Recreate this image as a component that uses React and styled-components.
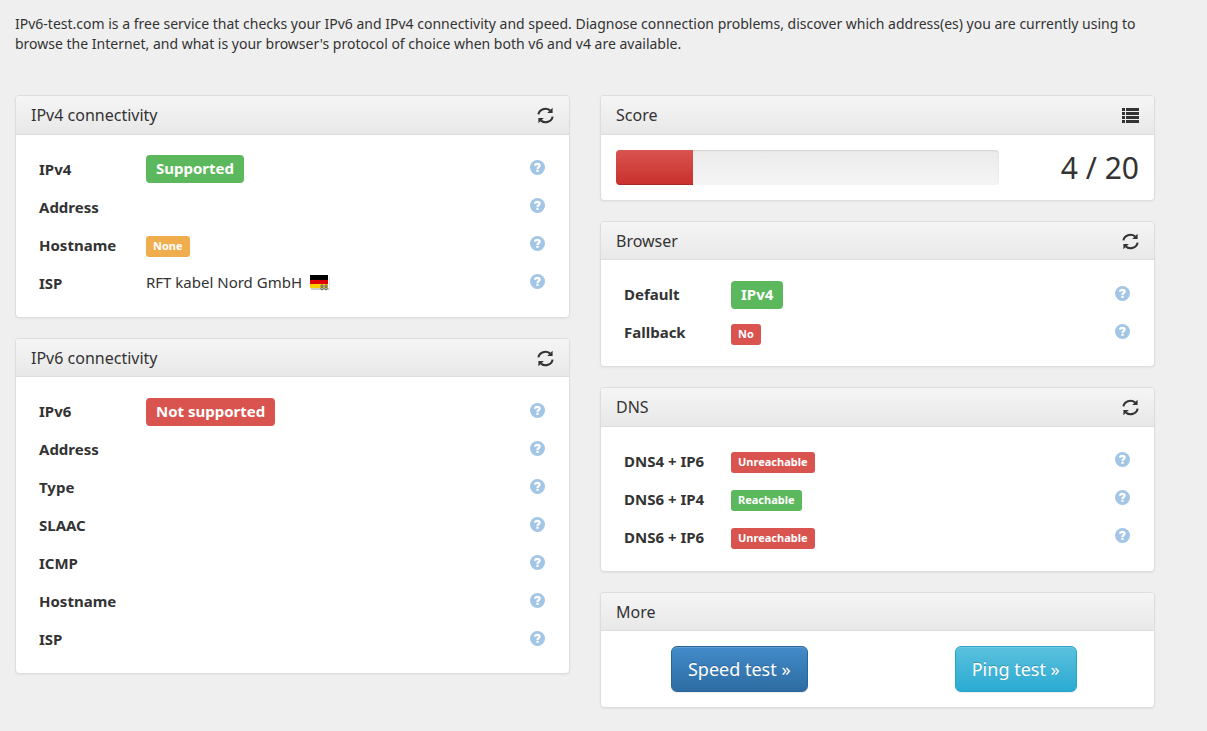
import React from "react";
import styled, { createGlobalStyle, css } from "styled-components";

const GlobalStyle = createGlobalStyle`
  *, *::before, *::after { box-sizing: border-box; }
  body {
    margin: 0;
    background: #efefef;
    color: #333;
    font: 14px/20px "Noto Sans", "Open Sans", sans-serif;
  }
`;

const Page = styled.main`
  padding: 14px 52px 23px 15px;
`;

const Intro = styled.p`
  margin: 0 0 41px;
`;

const Columns = styled.div`
  display: grid;
  grid-template-columns: 1fr 1fr;
  gap: 30px;
  align-items: start;
`;

const Column = styled.div`
  display: flex;
  flex-direction: column;
  gap: 20px;
`;

const Panel = styled.section`
  background: #fff;
  border: 1px solid #ddd;
  border-radius: 4px;
  box-shadow: 0 1px 2px rgba(0, 0, 0, 0.05);
`;

const PanelHeading = styled.header`
  display: flex;
  align-items: center;
  justify-content: space-between;
  padding: 11px 15px 9px;
  border-bottom: 1px solid #ddd;
  border-radius: 3px 3px 0 0;
  background: linear-gradient(to bottom, #f5f5f5, #e8e8e8);
`;

const PanelTitle = styled.h3`
  margin: 0;
  font-size: 16px;
  font-weight: 400;
  line-height: 1.1;
`;

const IconButton = styled.button`
  display: flex;
  padding: 0;
  border: 0;
  background: none;
  color: #333;
  cursor: pointer;

  svg { width: 17px; height: 17px; }
`;

const PanelBody = styled.div`
  padding: 15px;
`;

const Table = styled.table`
  width: 100%;
  border-collapse: collapse;
  table-layout: fixed;
  font-size: 15px;
`;

const Row = styled.tr`
  height: 38px;
`;

const Name = styled.th`
  width: 115px;
  padding: 0 0 0 8px;
  font-size: 15px;
  text-align: left;
`;

const Value = styled.td`
  padding: 0;
`;

const ValueLine = styled.div`
  display: flex;
  align-items: center;
  gap: 8px;
  padding-bottom: 2px;
`;

const HelpCell = styled.td`
  width: 30px;
  padding: 0 9px 0 0;
`;

const HelpLink = styled.a`
  display: flex;
  justify-content: flex-end;
  margin-bottom: 2px;
  color: #a3c6e6;

  svg { width: 15px; height: 15px; }
`;

const tones = { success: "#5cb85c", warning: "#f0ad4e", danger: "#d9534f" };

const Badge = styled.span`
  display: block;
  width: fit-content;
  background: ${(p) => tones[p.$tone]};
  color: #fff;
  font-weight: 700;
  ${(p) =>
    p.$large
      ? css`
          margin-top: 1px;
          padding: 0 10px 2px;
          border-radius: 4px;
          font-size: 15px;
          line-height: 26px;
        `
      : css`
          margin-top: 4px;
          padding: 0 7px 2px;
          border-radius: 3px;
          font-size: 11px;
          line-height: 19px;
        `}
`;

const ScoreRow = styled.div`
  display: flex;
  align-items: center;
  height: 35px;
`;

const ScoreTrack = styled.div`
  flex: 1;
  height: 35px;
  overflow: hidden;
  border-radius: 4px;
  background: linear-gradient(to bottom, #ebebeb, #f5f5f5);
  box-shadow: inset 0 1px 2px rgba(0, 0, 0, 0.1);
`;

const ScoreBar = styled.div`
  height: 100%;
  background: linear-gradient(to bottom, #d9534f, #c9302c);
  box-shadow: inset 0 -1px 0 rgba(0, 0, 0, 0.15);
`;

const ScoreText = styled.strong`
  width: 140px;
  font-size: 30px;
  font-weight: 400;
  line-height: 35px;
  text-align: right;
`;

const Actions = styled.div`
  display: grid;
  grid-template-columns: 1fr 1fr;
  justify-items: center;
  margin: 0 -15px;
`;

const buttonTones = {
  primary: css`
    border-color: #2b669a;
    background: linear-gradient(to bottom, #428bca, #2d6ca2);
  `,
  info: css`
    border-color: #28a4c9;
    background: linear-gradient(to bottom, #5bc0de, #2aabd2);
  `,
};

const ActionButton = styled.button`
  padding: 10px 16px;
  border: 1px solid;
  border-radius: 6px;
  color: #fff;
  font: inherit;
  font-size: 18px;
  line-height: 24px;
  text-shadow: 0 -1px 0 rgba(0, 0, 0, 0.2);
  box-shadow: inset 0 1px 0 rgba(255, 255, 255, 0.15), 0 1px 1px rgba(0, 0, 0, 0.075);
  cursor: pointer;
  ${(p) => buttonTones[p.$tone]}
`;

const Flag = styled.svg`
  width: 20px;
  height: 17px;
  margin-top: 4px;
`;

const RefreshIcon = () => (
  <svg viewBox="0 0 17 17" aria-hidden="true">
    <path d="M1.4 7.4A7.1 6.6 0 0 1 13 3.4" fill="none" stroke="currentColor" strokeWidth="2.1" />
    <path d="M15.6 9.6A7.1 6.6 0 0 1 4 13.6" fill="none" stroke="currentColor" strokeWidth="2.1" />
    <path d="M15.6.8V6H10.2zM1.4 16.2V11H6.8z" fill="currentColor" />
  </svg>
);

const ListIcon = () => (
  <svg viewBox="0 0 17 17" aria-hidden="true">
    <path
      d="M0 1h3v3H0zM4 1h13v3H4zM0 5h3v3H0zM4 5h13v3H4zM0 9h3v3H0zM4 9h13v3H4zM0 13h3v3H0zM4 13h13v3H4z"
      fill="currentColor"
    />
  </svg>
);

const HelpIcon = () => (
  <svg viewBox="0 0 15 15" aria-hidden="true">
    <circle cx="7.5" cy="7.5" r="7.5" fill="currentColor" />
    <path d="M5.1 5.7C5.2 3.4 9.6 3.3 9.6 5.6 9.6 7.2 7.5 7 7.5 9" fill="none" stroke="#fff" strokeWidth="2.3" />
    <path d="M6.3 9.8h2.4v2H6.3z" fill="#fff" />
  </svg>
);

const GermanFlag = () => (
  <Flag viewBox="0 0 20 17" role="img" aria-label="Germany">
    <path d="M1 13h18V1.500h.5V15H1z" fill="#ccc" />
    <path d="M0 0h18v5H0z" fill="#000" />
    <path d="M0 5h18v4H0z" fill="#d00" />
    <path d="M0 9h18v4H0z" fill="#ffce00" />
    <g fill="#c9c3a0" stroke="#666" strokeWidth="1">
      <circle cx="12" cy="11" r="1.200" />
      <circle cx="12" cy="13.500" r="1.300" />
      <circle cx="16" cy="11" r="1.200" />
      <circle cx="16" cy="13.500" r="1.300" />
    </g>
  </Flag>
);

function Card({ title, action, children }) {
  return (
    <Panel>
      <PanelHeading>
        <PanelTitle>{title}</PanelTitle>
        {action === "refresh" && <IconButton type="button" aria-label={`Refresh ${title}`}><RefreshIcon /></IconButton>}
        {action === "list" && <IconButton type="button" aria-label={`${title} details`}><ListIcon /></IconButton>}
      </PanelHeading>
      <PanelBody>{children}</PanelBody>
    </Panel>
  );
}

function ResultTable({ rows }) {
  return (
    <Table>
      <tbody>
        {rows.map(([name, value]) => (
          <Row key={name}>
            <Name scope="row">{name}</Name>
            <Value>{value}</Value>
            <HelpCell>
              <HelpLink href="#help" aria-label={`Help: ${name}`}><HelpIcon /></HelpLink>
            </HelpCell>
          </Row>
        ))}
      </tbody>
    </Table>
  );
}

const ipv4Rows = [
  ["IPv4", <Badge $tone="success" $large>Supported</Badge>],
  ["Address"],
  ["Hostname", <Badge $tone="warning">None</Badge>],
  ["ISP", <ValueLine>RFT kabel Nord GmbH <GermanFlag /></ValueLine>],
];

const ipv6Rows = [
  ["IPv6", <Badge $tone="danger" $large>Not supported</Badge>],
  ["Address"],
  ["Type"],
  ["SLAAC"],
  ["ICMP"],
  ["Hostname"],
  ["ISP"],
];

const browserRows = [
  ["Default", <Badge $tone="success" $large>IPv4</Badge>],
  ["Fallback", <Badge $tone="danger">No</Badge>],
];

const dnsRows = [
  ["DNS4 + IP6", <Badge $tone="danger">Unreachable</Badge>],
  ["DNS6 + IP4", <Badge $tone="success">Reachable</Badge>],
  ["DNS6 + IP6", <Badge $tone="danger">Unreachable</Badge>],
];

const score = 4;
const maxScore = 20;

export default function App() {
  return (
    <Page>
      <GlobalStyle />
      <Intro>
        IPv6-test.com is a free service that checks your IPv6 and IPv4 connectivity and speed. Diagnose connection
        problems, discover which address(es) you are currently using to browse the Internet, and what is your
        browser's protocol of choice when both v6 and v4 are available.
      </Intro>
      <Columns>
        <Column>
          <Card title="IPv4 connectivity" action="refresh"><ResultTable rows={ipv4Rows} /></Card>
          <Card title="IPv6 connectivity" action="refresh"><ResultTable rows={ipv6Rows} /></Card>
        </Column>
        <Column>
          <Card title="Score" action="list">
            <ScoreRow>
              <ScoreTrack>
                <ScoreBar style={{ width: `${(score / maxScore) * 100}%` }} />
              </ScoreTrack>
              <ScoreText>{score} / {maxScore}</ScoreText>
            </ScoreRow>
          </Card>
          <Card title="Browser" action="refresh"><ResultTable rows={browserRows} /></Card>
          <Card title="DNS" action="refresh"><ResultTable rows={dnsRows} /></Card>
          <Card title="More">
            <Actions>
              <ActionButton type="button" $tone="primary">Speed test »</ActionButton>
              <ActionButton type="button" $tone="info">Ping test »</ActionButton>
            </Actions>
          </Card>
        </Column>
      </Columns>
    </Page>
  );
}
